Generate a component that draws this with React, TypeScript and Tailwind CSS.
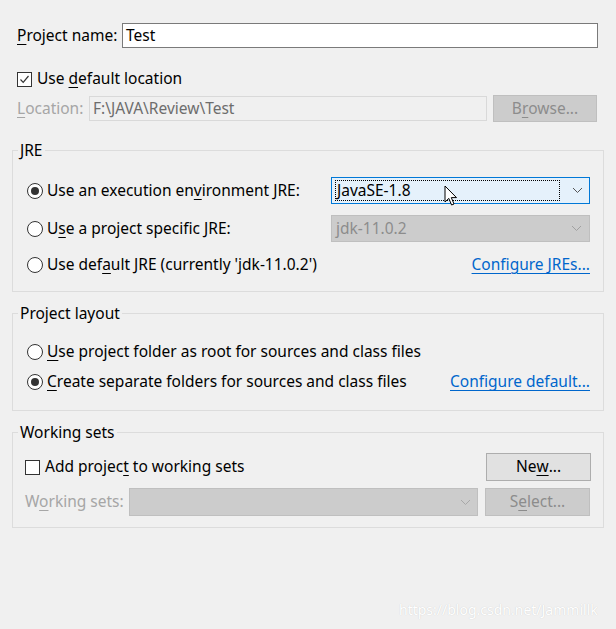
import React from "react";

const U = ({ children }: { children: React.ReactNode }) => (
  <span className="underline decoration-1 underline-offset-[3px]">{children}</span>
);

function Radio({ checked }: { checked?: boolean }) {
  return (
    <span className="flex h-[16px] w-[16px] shrink-0 items-center justify-center rounded-full border border-[#333333] bg-white">
      {checked && <span className="h-[8px] w-[8px] rounded-full bg-[#333333]" />}
    </span>
  );
}

function Checkbox({ checked }: { checked?: boolean }) {
  return (
    <span className="flex h-[15px] w-[15px] shrink-0 items-center justify-center border border-[#333333] bg-white">
      {checked && (
        <svg width="11" height="11" viewBox="0 0 11 11">
          <path d="M1.5 5.5 L4.2 8.3 L9.5 2" fill="none" stroke="#333" strokeWidth="1.2" />
        </svg>
      )}
    </span>
  );
}

function Chevron({ color }: { color: string }) {
  return (
    <svg width="11" height="7" viewBox="0 0 11 7">
      <path d="M1 1 L5.5 5.5 L10 1" fill="none" stroke={color} strokeWidth="1" />
    </svg>
  );
}

export default function App() {
  return (
    <div
      className="relative h-[629px] w-[616px] overflow-hidden bg-[#f0f0f0] text-[15.5px] text-black"
      style={{ fontFamily: '"Noto Sans", "Liberation Sans", sans-serif' }}
    >
      <div className="pl-[17px] pr-[18px] pt-[23px]">
        <div className="flex h-[25px] items-center">
          <span className="w-[105px] shrink-0">
            <U>P</U>roject name:
          </span>
          <div className="flex h-[25px] flex-1 items-center border border-[#7a7a7a] bg-white pl-[3px]">Test</div>
        </div>
        <div className="mt-[23px] flex h-[16px] items-center gap-[5px]">
          <Checkbox checked />
          <span>
            Use <U>d</U>efault location
          </span>
        </div>
        <div className="mt-[8px] flex h-[27px] items-center">
          <span className="w-[72px] shrink-0 text-[#a6a6a6]">
            <U>L</U>ocation:
          </span>
          <div className="flex h-[25px] w-[398px] items-center border border-[#d9d9d9] bg-[#f0f0f0] pl-[3px] text-[#6d6d6d]">
            F:\JAVA\Review\Test
          </div>
          <div className="ml-[6px] flex h-[27px] w-[104px] items-center justify-center border border-[#bfbfbf] bg-[#cccccc] text-[#8c8c8c]">
            B<U>r</U>owse...
          </div>
        </div>
      </div>

      <div className="mx-[12px] mt-[18px] flex flex-col">
        <fieldset className="border border-[#dcdcdc] pb-[13px] pl-[14px] pr-[13px] pt-[17px]">
          <legend className="-ml-[9px] px-[2px] text-[15.5px] leading-[20px]">JRE</legend>
          <div className="flex h-[27px] items-center">
            <Radio checked />
            <span className="ml-[4px] w-[284px]">
              Use an execution en<U>v</U>ironment JRE:
            </span>
            <div className="relative flex h-[27px] flex-1 items-center border border-[#0078d7] bg-[#e5f1fb] pl-[3px] pr-[6px]">
              <div className="flex h-[21px] flex-1 items-center border border-dotted border-black pl-[1px]">JavaSE-1.8</div>
              <span className="ml-[12px] flex w-[11px] items-center">
                <Chevron color="#555555" />
              </span>
            </div>
          </div>
          <div className="mt-[11px] flex h-[27px] items-center">
            <Radio />
            <span className="ml-[4px] w-[284px]">
              U<U>s</U>e a project specific JRE:
            </span>
            <div className="flex h-[27px] flex-1 items-center border border-[#bfbfbf] bg-[#cccccc] pl-[4px] pr-[7px] text-[#8c8c8c]">
              <span className="flex-1">jdk-11.0.2</span>
              <Chevron color="#a0a0a0" />
            </div>
          </div>
          <div className="mt-[9px] flex h-[27px] items-center">
            <Radio />
            <span className="ml-[4px] flex-1">
              Use def<U>a</U>ult JRE (currently 'jdk-11.0.2')
            </span>
            <span className="text-[#0066cc] underline decoration-1 underline-offset-[3px]">Configure JREs...</span>
          </div>
        </fieldset>

        <fieldset className="mt-[11px] border border-[#dcdcdc] pb-[18px] pl-[14px] pr-[13px] pt-[19px]">
          <legend className="-ml-[9px] px-[2px] text-[15.5px] leading-[20px]">Project layout</legend>
          <div className="flex h-[20px] items-center">
            <Radio />
            <span className="ml-[4px]">
              <U>U</U>se project folder as root for sources and class files
            </span>
          </div>
          <div className="mt-[10px] flex h-[20px] items-center">
            <Radio checked />
            <span className="ml-[4px] flex-1">
              <U>C</U>reate separate folders for sources and class files
            </span>
            <span className="text-[#0066cc] underline decoration-1 underline-offset-[3px]">Configure default...</span>
          </div>
        </fieldset>

        <fieldset className="mt-[11px] border border-[#dcdcdc] pb-[11px] pl-[12px] pr-[12px] pt-[11px]">
          <legend className="-ml-[7px] px-[2px] text-[15.5px] leading-[20px]">Working sets</legend>
          <div className="flex h-[28px] items-center">
            <Checkbox />
            <span className="ml-[5px] flex-1">
              Add projec<U>t</U> to working sets
            </span>
            <div className="flex h-[28px] w-[105px] items-center justify-center border border-[#adadad] bg-[#e1e1e1]">
              Ne<U>w</U>...
            </div>
          </div>
          <div className="mt-[7px] flex h-[28px] items-center">
            <span className="w-[104px] shrink-0 text-[#a6a6a6]">
              W<U>o</U>rking sets:
            </span>
            <div className="flex h-[28px] w-[349px] items-center justify-end border border-[#bfbfbf] bg-[#cccccc] pr-[6px]">
              <Chevron color="#a8a8a8" />
            </div>
            <div className="ml-[7px] flex h-[28px] w-[105px] items-center justify-center border border-[#bfbfbf] bg-[#cccccc] text-[#8c8c8c]">
              S<U>e</U>lect...
            </div>
          </div>
        </fieldset>
      </div>

      <svg className="absolute left-[444px] top-[185px]" width="14" height="22" viewBox="0 0 14 22">
        <path d="M1 1 L1 17 L4.8 13.4 L7.6 20 L10 19 L7.3 12.6 L12.5 12.6 Z" fill="white" stroke="black" strokeWidth="1" strokeLinejoin="round" />
      </svg>

      <div className="absolute left-[399px] top-[599px] text-[14px] text-white [text-shadow:0_0_1px_rgba(0,0,0,0.18)]">
        https://blog.csdn.net/Jammillk
      </div>
    </div>
  );
}
